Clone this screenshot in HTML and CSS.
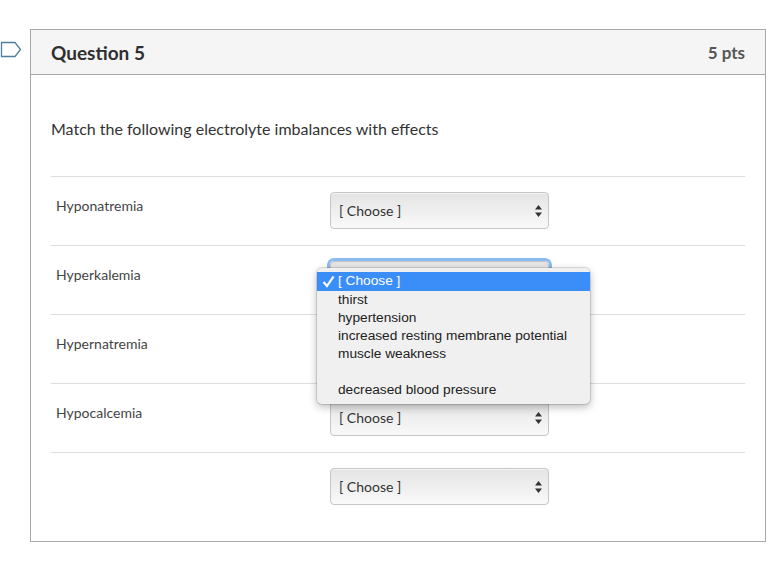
FILE: index.html
```html
<!DOCTYPE html>
<html>
<head>
    <title>Question 5</title>
    <link rel="stylesheet" href="styles.css">
</head>
<body>
    <div class="page">
        <div class="flag">
            <svg width="24" height="20" viewBox="0 0 24 20">
                <path d="M1.5 1.5 H15 L20.5 8.5 L15 15.5 H1.5 Z" fill="none" stroke="#4f7f9f" stroke-width="1.3"/>
            </svg>
        </div>

        <div class="question">
            <div class="header">
                <h2>Question 5</h2>
                <span class="points">5 pts</span>
            </div>

            <div class="content">
                <p class="text">Match the following electrolyte imbalances with effects</p>

                <div class="answers">
                    <div class="answer">
                        <div class="label">Hyponatremia</div>
                        <div class="select">
                            <span>[ Choose ]</span>
                            <svg class="arrows" width="7" height="12" viewBox="0 0 7 12"><path d="M3.5 0 L7 4.5 H0 Z M3.5 12 L7 7.5 H0 Z" fill="#333"/></svg>
                        </div>
                    </div>

                    <div class="answer">
                        <div class="label">Hyperkalemia</div>
                        <div class="select-wrap">
                            <!-- covered by the open menu -->
                            <div class="select focused covered">
                                <span>[ Choose ]</span>
                                <svg class="arrows" width="7" height="12" viewBox="0 0 7 12"><path d="M3.5 0 L7 4.5 H0 Z M3.5 12 L7 7.5 H0 Z" fill="#333"/></svg>
                            </div>
                            <ul class="menu">
                                <li class="selected">
                                    <svg class="check" width="13" height="13" viewBox="0 0 13 13"><path d="M1.5 7 L5 11 L11.5 1.5" fill="none" stroke="#fff" stroke-width="2.2"/></svg>[ Choose ]
                                </li>
                                <li>thirst</li>
                                <li>hypertension</li>
                                <li>increased resting membrane potential</li>
                                <li>muscle weakness</li>
                                <li>&nbsp;</li>
                                <li>decreased blood pressure</li>
                            </ul>
                        </div>
                    </div>

                    <div class="answer">
                        <div class="label">Hypernatremia</div>
                        <div class="select covered">
                            <span>[ Choose ]</span>
                            <svg class="arrows" width="7" height="12" viewBox="0 0 7 12"><path d="M3.5 0 L7 4.5 H0 Z M3.5 12 L7 7.5 H0 Z" fill="#333"/></svg>
                        </div>
                    </div>

                    <div class="answer">
                        <div class="label">Hypocalcemia</div>
                        <div class="select">
                            <span>[ Choose ]</span>
                            <svg class="arrows" width="7" height="12" viewBox="0 0 7 12"><path d="M3.5 0 L7 4.5 H0 Z M3.5 12 L7 7.5 H0 Z" fill="#333"/></svg>
                        </div>
                    </div>

                    <div class="answer">
                        <div class="label"></div>
                        <div class="select">
                            <span>[ Choose ]</span>
                            <svg class="arrows" width="7" height="12" viewBox="0 0 7 12"><path d="M3.5 0 L7 4.5 H0 Z M3.5 12 L7 7.5 H0 Z" fill="#333"/></svg>
                        </div>
                    </div>
                </div>
            </div>
        </div>
    </div>
</body>
</html>
```

FILE: styles.css
```css
body {
    margin: 0;
    font-family: Lato, "Open Sans", sans-serif;
    color: #333;
    background-color: #fff;
}

.page {
    display: flex;
    padding-top: 29px;
}

.flag {
    width: 30px;
    padding-top: 12px;
}

.flag svg {
    display: block;
}

.question {
    width: 734px;
    border: 1px solid #a9a9a9;
}

.header {
    display: flex;
    justify-content: space-between;
    align-items: center;
    height: 44px;
    padding: 0 20px;
    background-color: #f5f5f5;
    border-bottom: 1px solid #a9a9a9;
}

.header h2 {
    margin: 0;
    font-size: 19px;
    font-weight: bold;
    color: #2f2f2f;
}

.points {
    font-size: 17px;
    font-weight: bold;
    color: #555;
}

.content {
    padding: 44px 20px 20px;
}

.text {
    margin: 0 0 37px;
    font-size: 16px;
    line-height: 20px;
}

.answer {
    display: grid;
    grid-template-columns: 279px 219px;
    align-items: start;
    padding: 15px 0 16px;
    border-top: 1px solid #dedede;
}

.label {
    padding: 6px 0 0 5px;
    font-size: 14px;
    line-height: 16px;
    color: #444;
}

.select {
    display: flex;
    justify-content: space-between;
    align-items: center;
    box-sizing: border-box;
    height: 37px;
    padding: 0 6px 0 8px;
    border: 1px solid #c6c6c6;
    border-radius: 4px;
    background: linear-gradient(#e4e4e4, #f9f9f9);
    box-shadow: inset 0 1px 0 rgba(255, 255, 255, 0.6);
    font-size: 14px;
    color: #333;
}

.select.focused {
    box-shadow: 0 0 0 3px #8cbaf3;
}

.select.covered span {
    visibility: hidden;
}

.select-wrap {
    position: relative;
}

/* open native-looking menu */
.menu {
    position: absolute;
    top: 7px;
    left: -13px;
    z-index: 2;
    width: 273px;
    margin: 0;
    padding: 5px 0 5px;
    list-style: none;
    background-color: #f0f0f0;
    border-radius: 5px;
    box-shadow: 0 0 0 1px rgba(0, 0, 0, 0.12), 0 3px 8px rgba(0, 0, 0, 0.28);
    font-family: "Liberation Sans", Arial, sans-serif;
    font-size: 13.7px;
    color: #222;
}

.menu li {
    position: relative;
    height: 18px;
    line-height: 18px;
    padding-left: 21px;
    white-space: nowrap;
}

.menu li.selected {
    margin-top: -1px;
    padding-bottom: 1px;
    background-color: #3b8ef8;
    color: #fff;
}

.check {
    position: absolute;
    left: 5px;
    top: 3px;
}
```
